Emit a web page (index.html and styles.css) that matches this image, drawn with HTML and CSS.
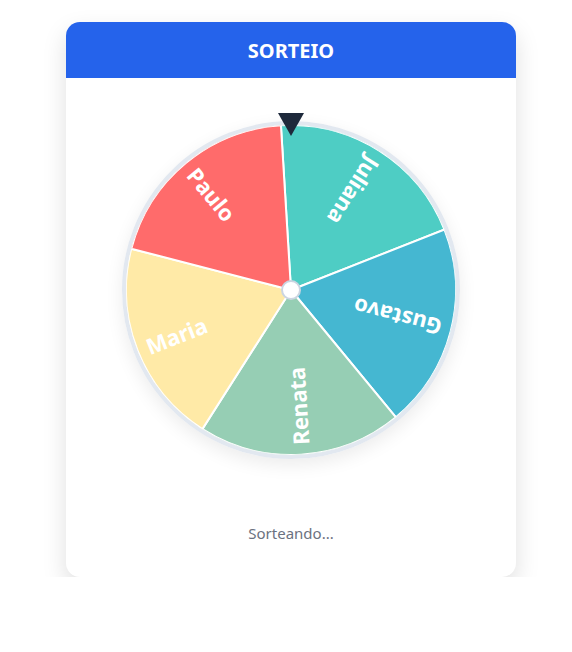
FILE: index.html
```html
<!DOCTYPE html>
<html lang="pt-BR">
<head>
    <meta charset="UTF-8">
    <meta name="viewport" content="width=device-width, initial-scale=1.0">
    <title>Sorteio</title>
    <link rel="stylesheet" href="styles.css">
</head>
<body>

<div class="card">
    <div class="card-header">SORTEIO</div>

    <div class="card-body">
        <!-- Roleta -->
        <div class="wheel-area">
            <div class="pointer"></div>
            <div class="wheel">
                <svg class="wheel-svg" width="330" height="330" viewBox="-165 -165 330 330">
                    <g transform="rotate(-3.5)">
                        <path class="slice" fill="#4ecdc4" d="M0 0 L0 -165 A165 165 0 0 1 156.92 -50.99 Z"/>
                        <text class="label" transform="rotate(36) translate(0 -155) rotate(90)">Juliana</text>
                    </g>
                    <g transform="rotate(68.5)">
                        <path class="slice" fill="#45b7d1" d="M0 0 L0 -165 A165 165 0 0 1 156.92 -50.99 Z"/>
                        <text class="label" transform="rotate(36) translate(0 -155) rotate(90)">Gustavo</text>
                    </g>
                    <g transform="rotate(140.5)">
                        <path class="slice" fill="#96ceb4" d="M0 0 L0 -165 A165 165 0 0 1 156.92 -50.99 Z"/>
                        <text class="label" transform="rotate(36) translate(0 -155) rotate(90)">Renata</text>
                    </g>
                    <g transform="rotate(212.5)">
                        <path class="slice" fill="#ffeaa7" d="M0 0 L0 -165 A165 165 0 0 1 156.92 -50.99 Z"/>
                        <text class="label" transform="rotate(36) translate(0 -155) rotate(90)">Maria</text>
                    </g>
                    <g transform="rotate(284.5)">
                        <path class="slice" fill="#ff6b6b" d="M0 0 L0 -165 A165 165 0 0 1 156.92 -50.99 Z"/>
                        <text class="label" transform="rotate(36) translate(0 -155) rotate(90)">Paulo</text>
                    </g>
                    <circle class="hub" cx="0" cy="0" r="9"/>
                </svg>
            </div>
        </div>

        <p class="status">Sorteando...</p>
    </div>
</div>

</body>
</html>
```

FILE: styles.css
```css
* {
    margin: 0;
    padding: 0;
    box-sizing: border-box;
}

body {
    background: #fff;
    font-family: 'Noto Sans', 'Open Sans', sans-serif;
    padding: 22px 0 0 10px;
}

.card {
    width: 450px;
    margin: 0 auto;
    background: #fff;
    border-radius: 14px;
    overflow: hidden;
    box-shadow: 0 10px 25px rgba(0, 0, 0, 0.13);
}

.card-header {
    height: 56px;
    background: #2563eb;
    color: #fff;
    font-size: 20px;
    font-weight: 700;
    display: flex;
    justify-content: center;
    align-items: center;
}

.card-body {
    padding: 35px 0 34px;
    display: flex;
    flex-direction: column;
    align-items: center;
}

/* Roleta */
.wheel-area {
    position: relative;
    padding-top: 8px;
}

.pointer {
    position: absolute;
    top: 0;
    left: 50%;
    transform: translateX(-50%);
    width: 0;
    height: 0;
    border-left: 13.5px solid transparent;
    border-right: 13.5px solid transparent;
    border-top: 23px solid #1e293b;
    z-index: 2;
}

.wheel {
    width: 338px;
    height: 338px;
    border-radius: 50%;
    border: 4px solid #e2e8f0;
    box-shadow: 0 6px 18px rgba(0, 0, 0, 0.08);
    overflow: hidden;
}

.wheel-svg {
    display: block;
}

.slice {
    stroke: #fff;
    stroke-width: 2;
}

.label {
    fill: #fff;
    font-family: 'Noto Sans', 'Open Sans', sans-serif;
    font-size: 22px;
    font-weight: 700;
    dominant-baseline: central;
}

.hub {
    fill: #fff;
    stroke: #cbd5e1;
    stroke-width: 2;
}

.status {
    margin-top: 64px;
    font-size: 15px;
    line-height: 20px;
    color: #6b7280;
}
```
